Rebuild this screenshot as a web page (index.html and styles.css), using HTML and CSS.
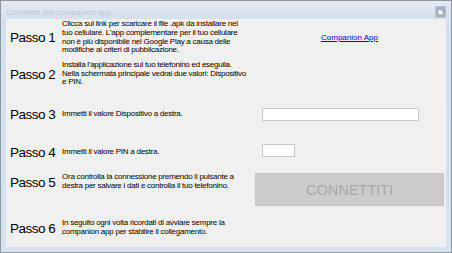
FILE: index.html
```html
<!DOCTYPE html>
<html lang="it">
<head>
    <meta charset="UTF-8">
    <meta name="viewport" content="width=device-width, initial-scale=1.0">
    <title>Connettiti alla companion app</title>
    <link rel="stylesheet" href="styles.css">
</head>
<body>

    <div class="window">
        <!-- Title bar -->
        <div class="titlebar">
            <span class="title">Connettiti alla companion app</span>
            <span class="close"><span class="close-glyph"></span></span>
        </div>

        <div class="client">
            <div class="step step-1">
                <div class="step-label">Passo 1</div>
                <div class="step-text">Clicca sul link per scaricare il file .apk da installare nel<br>tuo cellulare. L'app complementare per il tuo cellulare<br>non è più disponibile nel Google Play a causa delle<br>modifiche ai criteri di pubblicazione.</div>
                <div class="step-action centered">
                    <a href="#" class="app-link">Companion App</a>
                </div>
            </div>

            <div class="step step-2">
                <div class="step-label">Passo 2</div>
                <div class="step-text">Installa l'applicazione sul tuo telefonino ed eseguila.<br>Nella schermata principale vedrai due valori: Dispositivo<br>e PIN.</div>
                <div class="step-action"></div>
            </div>

            <div class="step step-3">
                <div class="step-label">Passo 3</div>
                <div class="step-text">Immetti il valore Dispositivo a destra.</div>
                <div class="step-action">
                    <input type="text" class="field field-device">
                </div>
            </div>

            <div class="step step-4">
                <div class="step-label">Passo 4</div>
                <div class="step-text">Immetti il valore PIN a destra.</div>
                <div class="step-action">
                    <input type="text" class="field field-pin">
                </div>
            </div>

            <div class="step step-5">
                <div class="step-label">Passo 5</div>
                <div class="step-text">Ora controlla la connessione premendo il pulsante a<br>destra per salvare i dati e controlla il tuo telefonino.</div>
                <div class="step-action top">
                    <button class="connect" disabled>CONNETTITI</button>
                </div>
            </div>

            <div class="step step-6">
                <div class="step-label">Passo 6</div>
                <div class="step-text">In seguito ogni volta ricordati di avviare sempre la<br>companion app per stabilire il collegamento.</div>
                <div class="step-action"></div>
            </div>
        </div>
    </div>

</body>
</html>
```

FILE: styles.css
```css
body {
    margin: 0;
    padding: 0;
    font-family: "Liberation Sans", Arial, sans-serif;
    background-color: #ffffff;
}

.window {
    width: 452px;
    height: 253px;
    box-sizing: border-box;
    border: 1px solid #8f979f;
    background: linear-gradient(#e2eaf4, #d3dfee 20px, #d6e2f0);
    padding: 0 5px 5px 5px;
    display: flex;
    flex-direction: column;
}

.titlebar {
    height: 18px;
    display: flex;
    align-items: center;
    justify-content: space-between;
}

.title {
    font-size: 8px;
    color: #bcc7d4;
    padding-top: 4px;
}

.close {
    width: 9px;
    height: 10px;
    margin-top: 4px;
    background-color: #a6afba;
    border: 1px solid #bcc5cf;
    display: flex;
    align-items: center;
    justify-content: center;
}

.close-glyph {
    width: 3px;
    height: 3px;
    background-color: #f4f6f8;
    border: 1px solid #c9ced4;
}

.client {
    flex: 1;
    background-color: #f0f0f0;
    overflow: hidden;
}

.step {
    display: flex;
    align-items: center;
}

.step-1 { height: 37px; }
.step-2 { height: 36px; }
.step-3 { height: 44px; }
.step-4 { height: 32px; }
.step-5 { height: 28px; }
.step-6 { height: 38px; padding-top: 13px; }

.step-label {
    width: 52px;
    padding-left: 4px;
    font-size: 13.5px;
    letter-spacing: -0.5px;
    color: #000;
}

.step-text {
    width: 193px;
    font-size: 8px;
    letter-spacing: -0.25px;
    line-height: 8.7px;
    white-space: nowrap;
    color: #000;
}

.step-action {
    width: 189px;
    display: flex;
    align-items: center;
}

.step-action.centered {
    justify-content: center;
}

.step-action.top {
    align-self: flex-start;
    margin-top: 5px;
}

.app-link {
    font-size: 8px;
    color: #0000ee;
    text-decoration: underline;
}

.field {
    margin: 0 0 0 7px;
    padding: 0;
    height: 13px;
    box-sizing: border-box;
    background-color: #fff;
    border: 1px solid #c9c9c9;
    outline: none;
}

.field-device { width: 157px; }
.field-pin { width: 33px; margin-top: -4px; }

.connect {
    width: 189px;
    height: 33px;
    margin: 0;
    background-color: #cccccc;
    border: 1px solid #c6c6c6;
    color: #a8a8a8;
    font-family: "Liberation Sans", Arial, sans-serif;
    font-size: 14.5px;
    padding: 0;
}
```
